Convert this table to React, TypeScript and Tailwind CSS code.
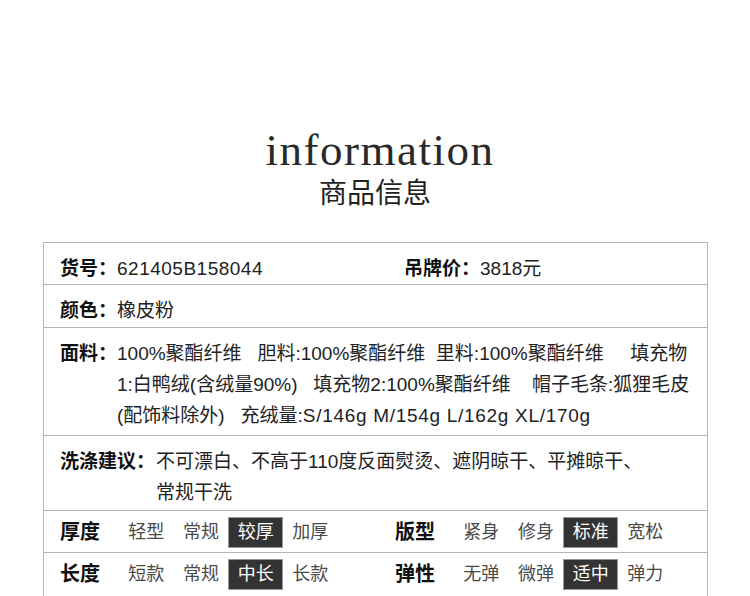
import React from 'react'

const body = "font-['Liberation_Sans','Noto_Sans_CJK_SC',sans-serif]"

function Tag({ text, active }: { text: string; active?: boolean }) {
  return (
    <div
      className={
        active
          ? 'w-[54.67px] h-[31px] leading-[29px] text-center text-[18px] border border-[#9a9a9a] bg-[#333333] text-white'
          : 'w-[54.67px] h-[31px] leading-[29px] text-center text-[18px] border border-transparent text-[#4a4a4a]'
      }
    >
      {text}
    </div>
  )
}

function TagGroup({ label, tags, active, width }: { label: string; tags: string[]; active: number; width?: string }) {
  return (
    <div className={`flex ${width ?? ''}`}>
      <div className="w-[59px] h-[31px] leading-[31px] text-[20px] font-bold text-[#111]">{label}</div>
      {tags.map((t, i) => (
        <Tag key={t + i} text={t} active={i === active} />
      ))}
    </div>
  )
}

export default function App() {
  return (
    <div className={`w-[750px] h-[596px] bg-white overflow-hidden ${body}`}>
      {/* heading */}
      <div className="pt-[128px] text-center">
        <div className="pl-[10px] font-['Liberation_Serif',serif] text-[45px] leading-[45px] tracking-[1.5px] text-[#2a2a2a]">
          information
        </div>
        <div className="mt-[4px] font-['Noto_Sans_CJK_SC',sans-serif] text-[28px] leading-[28px] text-[#222]">
          商品信息
        </div>
      </div>

      {/* table */}
      <div className="mt-[37px] ml-[43px] w-[665px] border border-[#b5b5b5] divide-y divide-[#b5b5b5] text-[19px] leading-[31px] text-[#222]">
        <div className="h-[42px] pt-[10px] px-[16px] flex">
          <div className="w-[344px] whitespace-pre">
            <span className="font-bold text-[#111]">货号：</span>
            <span className="tracking-[0.5px]">621405B158044</span>
          </div>
          <div className="whitespace-pre">
            <span className="font-bold text-[#111]">吊牌价：</span>3818元
          </div>
        </div>

        <div className="h-[43px] pt-[10px] px-[16px]">
          <span className="font-bold text-[#111]">颜色：</span>橡皮粉
        </div>

        <div className="h-[108px] pt-[10px] px-[16px] flex">
          <div className="w-[57px] shrink-0 font-bold text-[#111]">面料：</div>
          <div className="whitespace-pre">
            <div>{'100%聚酯纤维   胆料:100%聚酯纤维  里料:100%聚酯纤维     填充物'}</div>
            <div>{'1:白鸭绒(含绒量90%)   填充物2:100%聚酯纤维    帽子毛条:狐狸毛皮'}</div>
            <div>
              {'(配饰料除外)   充绒量:'}
              <span className="tracking-[0.7px]">S/146g M/154g L/162g XL/170g</span>
            </div>
          </div>
        </div>

        <div className="h-[75px] pt-[10px] px-[16px] flex">
          <div className="w-[96px] shrink-0 font-bold text-[#111]">洗涤建议：</div>
          <div className="whitespace-pre">
            <div>不可漂白、不高于110度反面熨烫、遮阴晾干、平摊晾干、</div>
            <div>常规干洗</div>
          </div>
        </div>

        <div className="h-[42px] pt-[6px] px-[16px] flex">
          <TagGroup label="厚度" tags={['轻型', '常规', '较厚', '加厚']} active={2} width="w-[335px]" />
          <TagGroup label="版型" tags={['紧身', '修身', '标准', '宽松']} active={2} />
        </div>

        <div className="h-[43px] pt-[6px] px-[16px] flex">
          <TagGroup label="长度" tags={['短款', '常规', '中长', '长款']} active={2} width="w-[335px]" />
          <TagGroup label="弹性" tags={['无弹', '微弹', '适中', '弹力']} active={2} />
        </div>
      </div>
    </div>
  )
}
